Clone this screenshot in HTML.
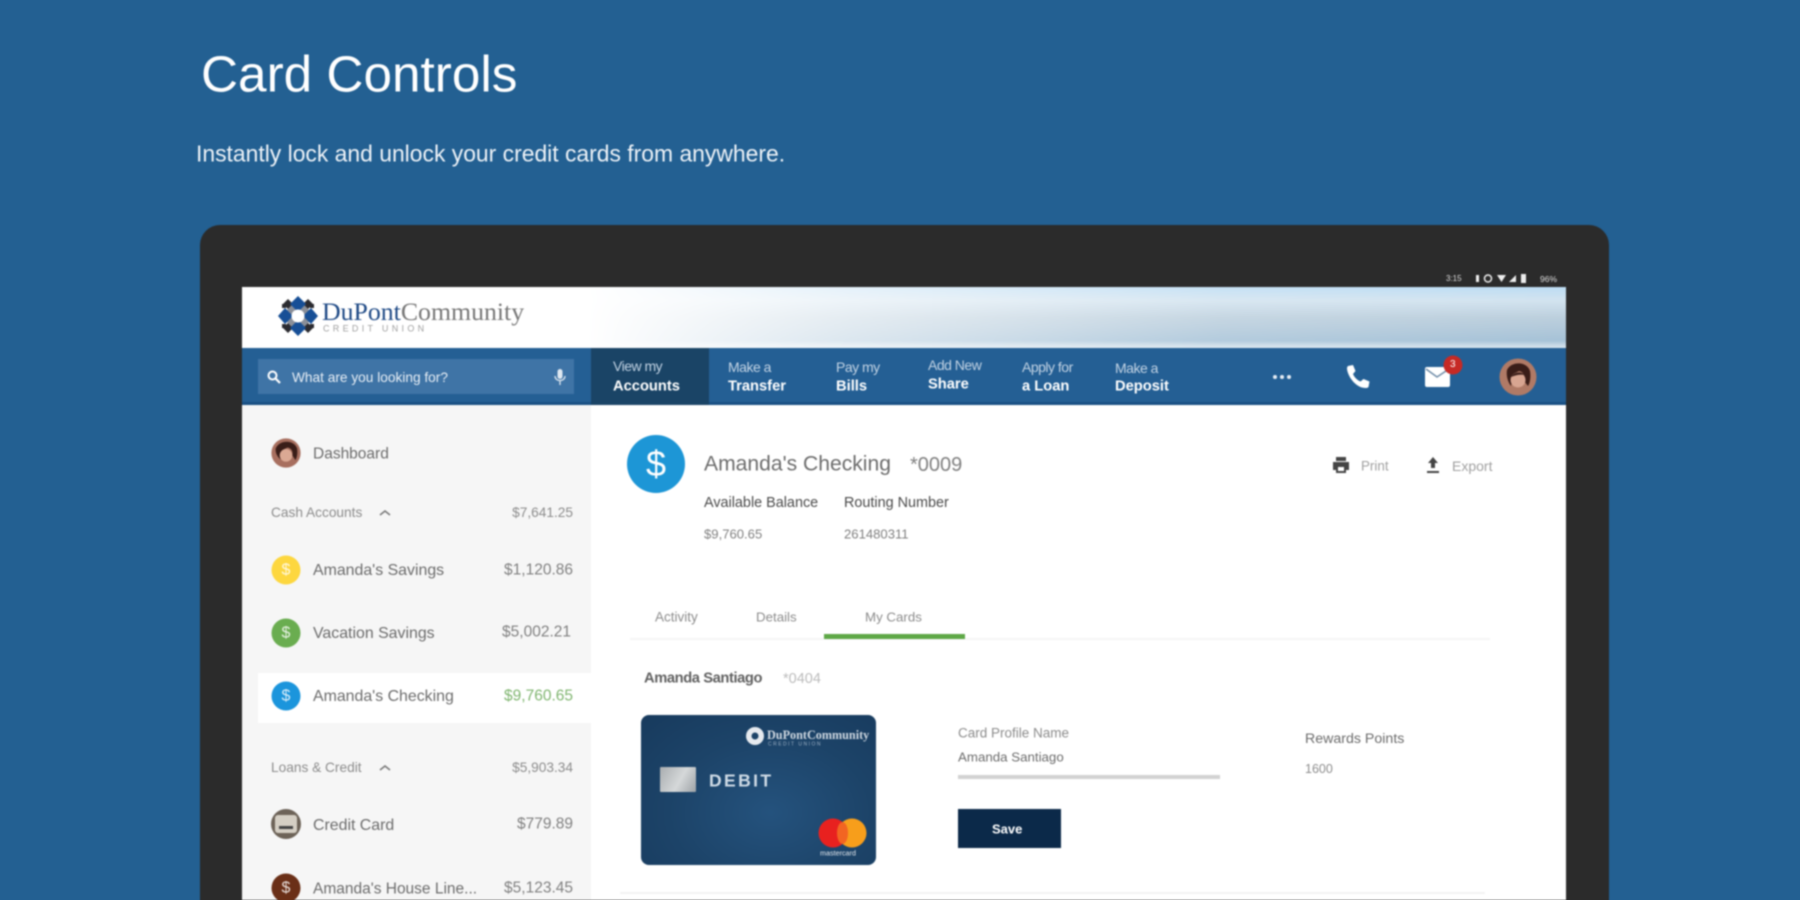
<!DOCTYPE html>
<html lang="en"><head><meta charset="utf-8"><title>Card Controls</title>
<style>
html,body{margin:0;padding:0;width:1800px;height:900px;overflow:hidden;background:#236092}
body{font-family:"Liberation Sans",sans-serif;position:relative}
.t{position:absolute;white-space:nowrap;line-height:1;transform:translateY(-50%)}
.r{position:absolute;background:#000}
.c{position:absolute;border-radius:50%;transform:translate(-50%,-50%)}
.wrap{position:absolute;left:0;top:0;width:1800px;height:900px;filter:blur(.9px)}
.g{color:#6c6c6c}
.amt{color:#808080;font-size:15.5px}
.sec{color:#8c8c8c;font-size:13.7px}
.nt{color:#c2d3e4;font-size:14px;letter-spacing:-.5px}
.nb{color:#fff;font-size:14.700px;font-weight:bold}
.d{position:absolute;width:29px;height:29px;border-radius:50%;transform:translate(-50%,-50%);color:rgba(255,255,255,.85);font-size:16px;line-height:29px;text-align:center}
svg{position:absolute;overflow:visible}
</style></head><body>
<div class="wrap">
<div class="t" style="left:201px;top:74px;font-size:51.300px;color:#fff">Card Controls</div>
<div class="t" style="left:196px;top:154px;font-size:22.900px;color:#eef3f8">Instantly lock and unlock your credit cards from anywhere.</div>

<div class="r" style="left:200px;top:225px;width:1409px;height:700px;background:#2b2b2b;border-radius:20px"></div>
<div class="t" style="left:1446px;top:279px;font-size:8px;color:#ddd">3:15</div>
<svg style="left:1474px;top:274px" width="70" height="10"><rect x="2" y="1" width="3" height="7" fill="#eee"/><circle cx="14" cy="4.500" r="3.500" fill="none" stroke="#eee" stroke-width="1.500"/><path d="M23 1h9l-4.500 7z" fill="#eee"/><path d="M35 8l7-7v7z" fill="#eee"/><rect x="47" y="0" width="5" height="9" fill="#eee"/></svg>
<div class="t" style="left:1540px;top:279px;font-size:8.500px;color:#ddd">96%</div>

<!-- screen -->
<div class="r" style="left:242px;top:287px;width:1324px;height:613px;background:#fff"></div>
<div class="r" style="left:242px;top:287px;width:1324px;height:61px;background:linear-gradient(90deg,#fff 26%,rgba(255,255,255,.6) 46%,rgba(255,255,255,.15) 74%,rgba(255,255,255,0) 100%),linear-gradient(180deg,#bcdcf3 0%,#d2e3ef 22%,#bccfdd 50%,#a6c2d7 88%,#dbe7ef 100%)"></div>

<!-- logo -->
<svg style="left:278px;top:296px" width="40" height="40" viewBox="0 0 40 40">
<g fill="#8a8f99"><path d="M20 3l17 17-17 17L3 20z"/></g>
<g fill="#2b2b30"><path d="M10 3l5 5-5 5-5-5z"/><path d="M30 3l5 5-5 5-5-5z"/><path d="M10 27l5 5-5 5-5-5z"/><path d="M30 27l5 5-5 5-5-5z"/><path d="M4 8h4v4H4zM32 8h4v4h-4zM4 28h4v4H4zM32 28h4v4h-4z"/></g>
<g fill="#174f96"><path d="M20 0l8 8-8 8-8-8z"/><path d="M20 24l8 8-8 8-8-8z"/><path d="M0 20l7-8 8 8-8 8z"/><path d="M25 20l8-8 7 8-7 8z"/></g>
<circle cx="20" cy="20" r="6.500" fill="#fff"/></svg>
<div class="t" style="left:322px;top:312px;font-family:'Liberation Serif',serif;font-size:25.800px;color:#777"><span style="color:#1f4a86">DuPont</span>Community</div>
<div class="t" style="left:323px;top:329px;font-size:9px;letter-spacing:3.300px;color:#a0a0a0">CREDIT UNION</div>

<!-- nav -->
<div class="r" style="left:242px;top:348px;width:1324px;height:57px;background:#245f94"></div>
<div class="r" style="left:242px;top:402px;width:1324px;height:3px;background:#1a5184"></div>
<div class="r" style="left:591px;top:348px;width:118px;height:57px;background:#1a4466"></div>
<div class="r" style="left:258px;top:359px;width:316px;height:35px;background:#3f74a6"></div>
<svg style="left:266px;top:369px" width="16" height="16" viewBox="0 0 16 16"><circle cx="6.500" cy="6.500" r="4" fill="none" stroke="#fff" stroke-width="2"/><path d="M9.500 9.500l4.500 4.500" stroke="#fff" stroke-width="2.200"/></svg>
<div class="t" style="left:292px;top:377.500px;font-size:13.700px;color:#e8eff6">What are you looking for?</div>
<svg style="left:554px;top:368px" width="12" height="18" viewBox="0 0 12 18"><rect x="3.500" y="1" width="5" height="10" rx="2.500" fill="#dfe8f1"/><path d="M1 8c0 6 10 6 10 0M6 12v5" stroke="#dfe8f1" stroke-width="1.300" fill="none"/></svg>

<div class="t nt" style="left:613px;top:366px">View my</div><div class="t nb" style="left:613px;top:387px">Accounts</div>
<div class="t nt" style="left:728px;top:367px">Make a</div><div class="t nb" style="left:728px;top:387px">Transfer</div>
<div class="t nt" style="left:836px;top:367px">Pay my</div><div class="t nb" style="left:836px;top:387px">Bills</div>
<div class="t nt" style="left:928px;top:365px">Add New</div><div class="t nb" style="left:928px;top:385px">Share</div>
<div class="t nt" style="left:1022px;top:367px">Apply for</div><div class="t nb" style="left:1022px;top:387px">a Loan</div>
<div class="t nt" style="left:1115px;top:368px">Make a</div><div class="t nb" style="left:1115px;top:387px">Deposit</div>

<svg style="left:1272px;top:373px" width="20" height="8"><circle cx="3" cy="4" r="2" fill="#e6edf4"/><circle cx="10" cy="4" r="2" fill="#e6edf4"/><circle cx="17" cy="4" r="2" fill="#e6edf4"/></svg>
<svg style="left:1345px;top:364px" width="26" height="26" viewBox="0 0 26 26"><path d="M3 2l5-1 2.500 6-2.500 3c1.500 3.500 4 6 7.500 7.500l3-2.500 6 2.500-1 5.500c-1 1-2 1-3 1C11 24 3 13 2 5c0-1 0-2 1-3z" fill="#fff"/></svg>
<div class="r" style="left:1425px;top:367px;width:25px;height:20px;background:#fff;border-radius:2px"></div>
<svg style="left:1425px;top:367px" width="25" height="20"><path d="M1 2l11 8 12-8" fill="none" stroke="#6f8ca8" stroke-width="1.500"/></svg>
<div class="c" style="left:1453px;top:365px;width:19px;height:19px;background:#c62a25"></div>
<div class="t" style="left:1450px;top:365px;font-size:10px;color:#fff">3</div>
<svg style="left:1499px;top:358px" width="38" height="38" viewBox="0 0 38 38"><circle cx="19" cy="19" r="18.500" fill="#b07a66"/><path d="M8 12C12 3 28 3 31 13c1 6 0 12-2 15l-4-5c1-5 0-9-5-10-4 2-7 4-7 9l-1 6C9 24 7 18 8 12z" fill="#3a1d18"/><circle cx="19" cy="22" r="7.500" fill="#d8a591"/><path d="M12 19c3-5 10-6 14-2-5-1-9 0-14 2z" fill="#3a1d18"/></svg>

<!-- sidebar -->
<div class="r" style="left:242px;top:405px;width:349px;height:495px;background:#f6f6f6"></div>
<div class="r" style="left:258px;top:673px;width:333px;height:50px;background:#fff"></div>

<svg style="left:271px;top:438px" width="30" height="30" viewBox="0 0 38 38"><circle cx="19" cy="19" r="18.500" fill="#a86f5f"/><path d="M6 13C11 2 29 2 33 13c1 6 0 12-2 15l-4-6c1-5-1-9-6-10-5 2-8 4-8 9l-1 6C8 24 5 18 6 13z" fill="#3a1d18"/><circle cx="19" cy="22" r="8" fill="#dba994"/></svg>
<div class="t g" style="left:313px;top:454px;font-size:15.500px">Dashboard</div>

<div class="t sec" style="left:271px;top:513px">Cash Accounts</div>
<svg style="left:379px;top:509px" width="12" height="8"><path d="M1 6l5-4 5 4" fill="none" stroke="#777" stroke-width="1.500"/></svg>
<div class="t sec" style="right:1227px;top:513px">$7,641.25</div>

<div class="d" style="left:286px;top:570px;background:#fdd73f">$</div>
<div class="t g" style="left:313px;top:571px;font-size:15.900px">Amanda's Savings</div>
<div class="t amt" style="right:1227px;top:570px">$1,120.86</div>

<div class="d" style="left:286px;top:633px;background:#6aad50">$</div>
<div class="t g" style="left:313px;top:634px;font-size:15.900px">Vacation Savings</div>
<div class="t amt" style="right:1229px;top:632px">$5,002.21</div>

<div class="d" style="left:286px;top:696px;background:#1b95dc">$</div>
<div class="t g" style="left:313px;top:697px;font-size:15.900px">Amanda's Checking</div>
<div class="t amt" style="right:1227px;top:696px;color:#7fb56f">$9,760.65</div>

<div class="t sec" style="left:271px;top:768px">Loans &amp; Credit</div>
<svg style="left:379px;top:764px" width="12" height="8"><path d="M1 6l5-4 5 4" fill="none" stroke="#777" stroke-width="1.500"/></svg>
<div class="t sec" style="right:1227px;top:768px">$5,903.34</div>

<div class="c" style="left:286px;top:824px;width:30px;height:30px;background:#6d6358"></div>
<div class="r" style="left:275px;top:815px;width:22px;height:18px;border-radius:3px;background:#d5cfc4"></div>
<div class="r" style="left:279px;top:826px;width:14px;height:2.500px;background:#444"></div>
<div class="t g" style="left:313px;top:826px;font-size:15.900px">Credit Card</div>
<div class="t amt" style="right:1227px;top:824px">$779.89</div>

<div class="d" style="left:286px;top:888px;background:#6a2f17">$</div>
<div class="t g" style="left:313px;top:889px;font-size:15.500px">Amanda's House Line...</div>
<div class="t amt" style="right:1227px;top:888px">$5,123.45</div>

<!-- main header -->
<div class="c" style="left:656px;top:464px;width:58px;height:58px;background:#1d96d6"></div>
<div class="t" style="left:645px;top:464px;font-size:36px;color:#fff;width:22px;text-align:center">$</div>
<div class="t g" style="left:704px;top:464px;font-size:21.100px">Amanda's Checking</div>
<div class="t" style="left:910px;top:465px;font-size:20px;color:#808080">*0009</div>
<div class="t" style="left:704px;top:503px;font-size:14.400px;color:#4a4a4a">Available Balance</div>
<div class="t" style="left:844px;top:503px;font-size:14.400px;color:#4a4a4a">Routing Number</div>
<div class="t" style="left:704px;top:534px;font-size:13.100px;color:#808080">$9,760.65</div>
<div class="t" style="left:844px;top:534px;font-size:13.100px;color:#808080">261480311</div>

<svg style="left:1332px;top:456px" width="18" height="18" viewBox="0 0 18 18"><path d="M4 1h10v4H4zM1 6h16v8h-3v3H4v-3H1z" fill="#444"/><rect x="6" y="11" width="6" height="4" fill="#fff"/></svg>
<div class="t" style="left:1361px;top:466px;font-size:13.400px;color:#a0a0a0">Print</div>
<svg style="left:1426px;top:456px" width="14" height="18" viewBox="0 0 14 18"><path d="M7 1l5 6H9v5H5V7H2zM1 15h12v2H1z" fill="#444"/></svg>
<div class="t" style="left:1452px;top:466px;font-size:14px;color:#a0a0a0">Export</div>

<!-- tabs -->
<div class="r" style="left:630px;top:638px;width:860px;height:2px;background:#f5f5f5"></div>
<div class="t" style="left:655px;top:617px;font-size:13.500px;color:#8c8c8c">Activity</div>
<div class="t" style="left:756px;top:617px;font-size:13.300px;color:#8c8c8c">Details</div>
<div class="t" style="left:865px;top:617px;font-size:13.300px;color:#8c8c8c">My Cards</div>
<div class="r" style="left:824px;top:634px;width:141px;height:5px;background:#5ea847"></div>

<div class="t" style="left:644px;top:679px;font-size:14.700px;color:#606060;font-weight:bold;letter-spacing:-.4px">Amanda Santiago</div>
<div class="t" style="left:783px;top:679px;font-size:14.500px;color:#bbb">*0404</div>

<!-- card -->
<div class="r" style="left:641px;top:715px;width:235px;height:150px;border-radius:8px;background:radial-gradient(ellipse at 55% 65%,#24527d 0%,#1c4368 55%,#173a5d 100%)"></div>
<div class="c" style="left:755px;top:736px;width:18px;height:18px;background:#e6eaef"></div>
<div class="c" style="left:755px;top:736px;width:7px;height:7px;background:#1c4368"></div>
<div class="t" style="left:767px;top:735px;font-family:'Liberation Serif',serif;font-size:12.200px;color:#cfd8e1;font-weight:bold">DuPontCommunity</div>
<div class="t" style="left:768px;top:745px;font-size:5px;letter-spacing:1.500px;color:#9fb2c6">CREDIT UNION</div>
<div class="r" style="left:660px;top:767px;width:36px;height:25px;background:linear-gradient(120deg,#a9adb0,#d5d8d9 55%,#9da2a6);border-radius:1px"></div>
<div class="t" style="left:709px;top:781px;font-size:17.500px;letter-spacing:2.400px;color:#cfdbe6;font-weight:bold">DEBIT</div>
<div class="c" style="left:833px;top:833px;width:29px;height:29px;background:#e8211f"></div>
<div class="c" style="left:852px;top:833px;width:29px;height:29px;background:#f79e1b"></div>
<div class="r" style="left:837px;top:822px;width:11px;height:22px;background:#f26522;border-radius:50%"></div>
<div class="t" style="left:820px;top:853px;font-size:7.200px;color:#e3e8ed">mastercard</div>

<div class="t" style="left:958px;top:733px;font-size:13.500px;color:#8c8c8c">Card Profile Name</div>
<div class="t" style="left:958px;top:757px;font-size:13.300px;color:#6c6c6c">Amanda Santiago</div>
<div class="r" style="left:958px;top:775px;width:262px;height:3.500px;background:#d2d2d2"></div>
<div class="r" style="left:958px;top:809px;width:103px;height:39px;background:#0b2949"></div>
<div class="t" style="left:992px;top:829px;font-size:13px;color:#fff;font-weight:bold">Save</div>
<div class="t" style="left:1305px;top:739px;font-size:14.200px;color:#6c6c6c">Rewards Points</div>
<div class="t" style="left:1305px;top:769px;font-size:12.500px;color:#8c8c8c">1600</div>
<div class="r" style="left:620px;top:892px;width:865px;height:2px;background:#f3f3f3"></div>
</div>
</body></html>
